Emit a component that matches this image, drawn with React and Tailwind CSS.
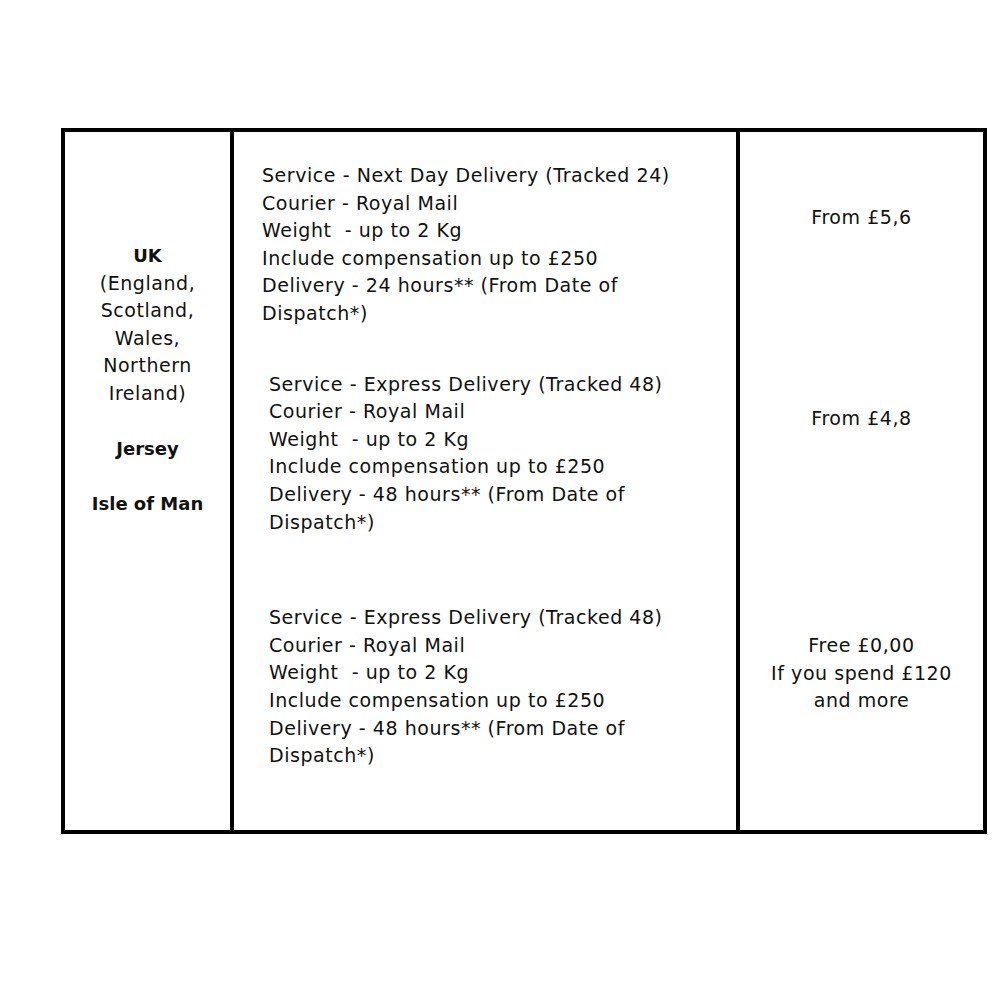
const services = [
  {
    pad: 'pl-[28px]',
    gap: 'mt-0',
    lines: [
      'Service - Next Day Delivery (Tracked 24)',
      'Courier - Royal Mail',
      'Weight  - up to 2 Kg',
      'Include compensation up to £250',
      'Delivery - 24 hours** (From Date of',
      'Dispatch*)',
    ],
  },
  {
    pad: 'pl-[35px]',
    gap: 'mt-[43px]',
    lines: [
      'Service - Express Delivery (Tracked 48)',
      'Courier - Royal Mail',
      'Weight  - up to 2 Kg',
      'Include compensation up to £250',
      'Delivery - 48 hours** (From Date of',
      'Dispatch*)',
    ],
  },
  {
    pad: 'pl-[35px]',
    gap: 'mt-[68px]',
    lines: [
      'Service - Express Delivery (Tracked 48)',
      'Courier - Royal Mail',
      'Weight  - up to 2 Kg',
      'Include compensation up to £250',
      'Delivery - 48 hours** (From Date of',
      'Dispatch*)',
    ],
  },
];

export default function App() {
  return (
    <div
      className="min-h-[1000px] w-[1000px] bg-white text-[19px] leading-[27.6px] tracking-[0.55px] text-[#111]"
      style={{ fontFamily: '"DejaVu Sans", sans-serif' }}
    >
      <div className="pl-[61px] pt-[128px]">
        <div className="flex h-[706px] w-[926px] border-4 border-black">
          <div className="w-[165px] pt-[110px] text-center">
            <p className="text-[18px] font-bold tracking-normal">UK</p>
            <p>(England,</p>
            <p>Scotland,</p>
            <p>Wales,</p>
            <p>Northern</p>
            <p>Ireland)</p>
            <p className="mt-[27.6px] text-[18px] font-bold tracking-normal">Jersey</p>
            <p className="mt-[27.6px] text-[18px] font-bold tracking-normal">Isle of Man</p>
          </div>

          <div className="w-[510px] border-x-4 border-black pt-[30px]">
            {services.map((s, i) => (
              <div key={i} className={`${s.pad} ${s.gap}`}>
                {s.lines.map((line) => (
                  <p key={line} className="whitespace-pre">
                    {line}
                  </p>
                ))}
              </div>
            ))}
          </div>

          <div className="flex-1 pt-[72px] text-center">
            <p>From £5,6</p>
            <p className="mt-[173px]">From £4,8</p>
            <div className="mt-[200px]">
              <p>Free £0,00</p>
              <p>If you spend £120</p>
              <p>and more</p>
            </div>
          </div>
        </div>
      </div>
    </div>
  );
}
